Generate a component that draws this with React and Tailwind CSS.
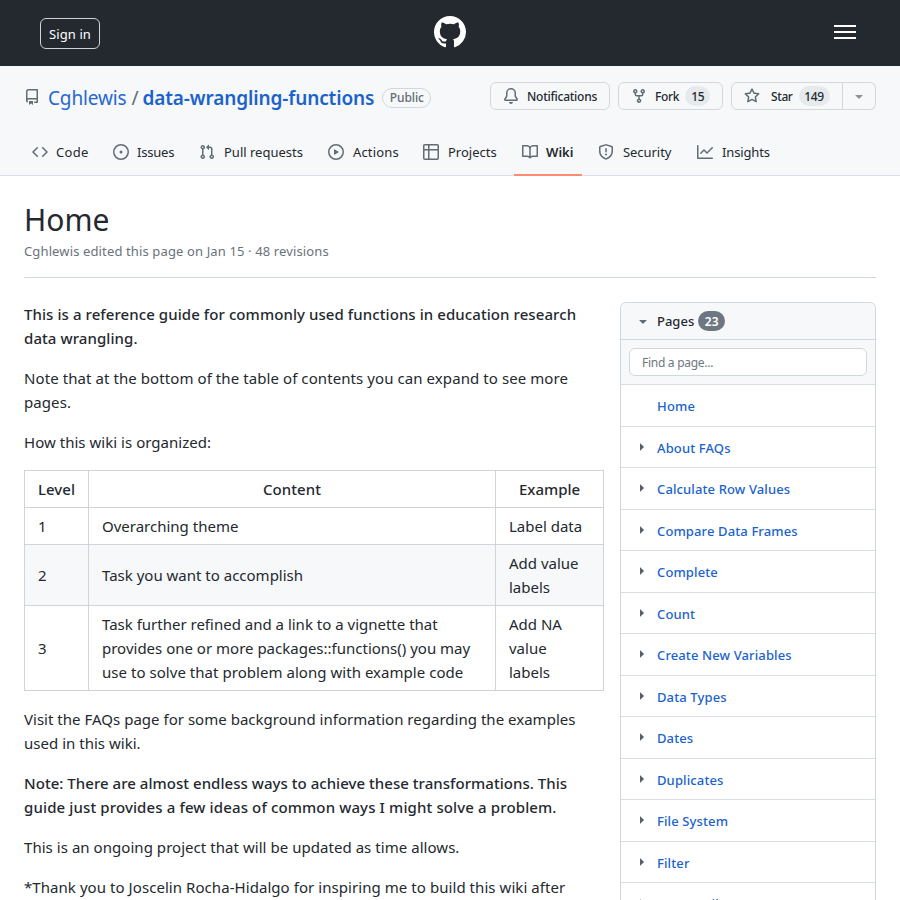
import React from "react";

const PATHS = {
  repo: "M2 2.5A2.5 2.5 0 014.5 0h8.75a.75.75 0 01.75.75v12.5a.75.75 0 01-.75.75h-2.5a.75.75 0 110-1.5h1.75v-2h-8a1 1 0 00-.714 1.7.75.75 0 01-1.072 1.05A2.495 2.495 0 012 11.5v-9zm10.5-1V9h-8c-.356 0-.694.074-1 .208V2.5a1 1 0 011-1h8zM5 12.25v3.25a.25.25 0 00.4.2l1.45-1.087a.25.25 0 01.3 0L8.6 15.7a.25.25 0 00.4-.2v-3.25a.25.25 0 00-.25-.25h-3.5a.25.25 0 00-.25.25z",
  bell: "M8 16a2 2 0 001.985-1.75c.017-.137-.097-.25-.235-.25h-3.5c-.138 0-.252.113-.235.25A2 2 0 008 16zM8 1.5A3.5 3.5 0 004.5 5v2.947c0 .346-.102.683-.294.97l-1.703 2.556a.018.018 0 00-.003.01l.001.006c0 .002.002.004.004.006a.017.017 0 00.006.004l.007.001h10.964l.007-.001a.016.016 0 00.006-.004.016.016 0 00.004-.006l.001-.007a.017.017 0 00-.003-.01l-1.703-2.554a1.75 1.75 0 01-.294-.97V5A3.5 3.5 0 008 1.5zM3 5a5 5 0 0110 0v2.947c0 .05.015.098.042.139l1.703 2.555A1.518 1.518 0 0113.482 13H2.518a1.518 1.518 0 01-1.263-2.36l1.703-2.554A.25.25 0 003 7.947V5z",
  fork: "M5 3.25a.75.75 0 11-1.5 0 .75.75 0 011.5 0zm0 2.122a2.25 2.25 0 10-1.5 0v.878A2.25 2.25 0 005.75 8.5h1.5v2.128a2.251 2.251 0 101.5 0V8.5h1.5a2.25 2.25 0 002.25-2.25v-.878a2.25 2.25 0 10-1.5 0v.878a.75.75 0 01-.75.75h-4.5A.75.75 0 015 6.25v-.878zm3.75 7.378a.75.75 0 11-1.5 0 .75.75 0 011.5 0zm3-8.75a.75.75 0 100-1.5.75.75 0 000 1.5z",
  star: "M8 .25a.75.75 0 01.673.418l1.882 3.815 4.21.612a.75.75 0 01.416 1.279l-3.046 2.97.719 4.192a.75.75 0 01-1.088.791L8 12.347l-3.766 1.98a.75.75 0 01-1.088-.79l.72-4.194L.818 6.374a.75.75 0 01.416-1.28l4.21-.611L7.327.668A.75.75 0 018 .25zm0 2.445L6.615 5.5a.75.75 0 01-.564.41l-3.097.45 2.24 2.184a.75.75 0 01.216.664l-.528 3.084 2.769-1.456a.75.75 0 01.698 0l2.77 1.456-.53-3.084a.75.75 0 01.216-.664l2.24-2.183-3.096-.45a.75.75 0 01-.564-.41L8 2.694v.001z",
  code: "M4.72 3.22a.75.75 0 011.06 1.06L2.06 8l3.72 3.72a.75.75 0 11-1.06 1.06L.47 8.53a.75.75 0 010-1.06l4.25-4.25zm6.56 0a.75.75 0 10-1.06 1.06L13.94 8l-3.72 3.72a.75.75 0 101.06 1.06l4.25-4.25a.75.75 0 000-1.06l-4.25-4.25z",
  issue: "M8 9.5a1.5 1.5 0 100-3 1.5 1.5 0 000 3z M8 0a8 8 0 100 16A8 8 0 008 0zM1.5 8a6.5 6.5 0 1113 0 6.5 6.5 0 01-13 0z",
  pull: "M7.177 3.073L9.573.677A.25.25 0 0110 .854v4.792a.25.25 0 01-.427.177L7.177 3.427a.25.25 0 010-.354zM3.75 2.5a.75.75 0 100 1.5.75.75 0 000-1.5zm-2.25.75a2.25 2.25 0 113 2.122v5.256a2.251 2.251 0 11-1.5 0V5.372A2.25 2.25 0 011.5 3.25zM11 2.5h-1V4h1a1 1 0 011 1v5.628a2.251 2.251 0 101.5 0V5A2.5 2.5 0 0011 2.5zm1 10.25a.75.75 0 111.5 0 .75.75 0 01-1.5 0zM3.75 12a.75.75 0 100 1.5.75.75 0 000-1.5z",
  play: "M1.5 8a6.5 6.5 0 1113 0 6.5 6.5 0 01-13 0zM8 0a8 8 0 100 16A8 8 0 008 0zM6.379 5.227A.25.25 0 006 5.442v5.117a.25.25 0 00.379.214l4.264-2.559a.25.25 0 000-.428L6.379 5.227z",
  table: "M0 1.75C0 .784.784 0 1.75 0h12.5C15.216 0 16 .784 16 1.75v12.5A1.75 1.75 0 0114.25 16H1.75A1.75 1.75 0 010 14.25V1.75zM1.5 6.5v7.75c0 .138.112.25.25.25H5v-8H1.5zM5 5H1.5V1.75a.25.25 0 01.25-.25H5V5zm1.5 1.5v8h7.75a.25.25 0 00.25-.25V6.5h-8zm8-1.5h-8V1.5h7.75a.25.25 0 01.25.25V5z",
  book: "M0 1.75A.75.75 0 01.75 1h4.253c1.227 0 2.317.59 3 1.501A3.744 3.744 0 0111.006 1h4.245a.75.75 0 01.75.75v10.5a.75.75 0 01-.75.75h-4.507a2.25 2.25 0 00-1.591.659l-.622.621a.75.75 0 01-1.06 0l-.622-.621A2.25 2.25 0 005.258 13H.75a.75.75 0 01-.75-.75V1.75zm8.755 3a2.25 2.25 0 012.25-2.25H14.5v9h-3.757c-.71 0-1.4.201-1.992.572l.004-7.322zm-1.504 7.324l.004-5.073-.002-2.253A2.25 2.25 0 005.003 2.5H1.5v9h3.757a3.75 3.75 0 011.994.574z",
  shield: "M7.467.133a1.75 1.75 0 011.066 0l5.25 1.68A1.75 1.75 0 0115 3.48V7c0 1.566-.32 3.182-1.303 4.682-.983 1.498-2.585 2.813-5.032 3.855a1.7 1.7 0 01-1.33 0c-2.447-1.042-4.049-2.357-5.032-3.855C1.32 10.182 1 8.566 1 7V3.48a1.75 1.75 0 011.217-1.667l5.25-1.68zm.61 1.429a.25.25 0 00-.153 0l-5.25 1.68a.25.25 0 00-.174.238V7c0 1.358.275 2.666 1.057 3.86.784 1.194 2.121 2.34 4.366 3.297a.2.2 0 00.154 0c2.245-.956 3.582-2.104 4.366-3.298C13.225 9.666 13.5 8.36 13.5 7V3.48a.25.25 0 00-.174-.237l-5.25-1.68zM9 10.5a1 1 0 11-2 0 1 1 0 012 0zm-.25-5.75a.75.75 0 10-1.5 0v3a.75.75 0 001.5 0v-3z",
  graph: "M1.5 1.75a.75.75 0 00-1.5 0v12.5c0 .414.336.75.75.75h14.5a.75.75 0 000-1.5H1.5V1.75zm14.28 2.53a.75.75 0 00-1.06-1.06L10 7.94 7.53 5.47a.75.75 0 00-1.06 0L3.22 8.72a.75.75 0 001.06 1.06L7 7.06l2.47 2.47a.75.75 0 001.06 0l5.25-5.25z",
  down: "M4.427 7.427l3.396 3.396a.25.25 0 00.354 0l3.396-3.396A.25.25 0 0011.396 7H4.604a.25.25 0 00-.177.427z",
  mark: "M8 0C3.58 0 0 3.58 0 8c0 3.54 2.29 6.53 5.47 7.59.4.07.55-.17.55-.38 0-.19-.01-.82-.01-1.49-2.01.37-2.53-.49-2.69-.94-.09-.23-.48-.94-.82-1.13-.28-.15-.68-.52-.01-.53.63-.01 1.08.58 1.23.82.72 1.21 1.87.87 2.33.66.07-.52.28-.87.51-1.07-1.78-.2-3.64-.89-3.64-3.95 0-.87.31-1.59.82-2.15-.08-.2-.36-1.02.08-2.12 0 0 .67-.21 2.2.82.64-.18 1.32-.27 2-.27.68 0 1.36.09 2 .27 1.53-1.04 2.2-.82 2.2-.82.44 1.1.16 1.92.08 2.12.51.56.82 1.27.82 2.15 0 3.07-1.87 3.75-3.65 3.95.29.25.54.73.54 1.48 0 1.07-.01 1.93-.01 2.2 0 .21.15.46.55.38A8.013 8.013 0 0016 8c0-4.42-3.58-8-8-8z",
};

function Icon({ name, className = "size-4 text-[#636b74]" }) {
  return (
    <svg viewBox="0 0 16 16" fill="currentColor" className={`shrink-0 ${className}`}>
      <path fillRule="evenodd" d={PATHS[name]} />
    </svg>
  );
}

const TABS = [
  ["code", "Code", "w-[73px]", "tracking-[0.3px]"],
  ["issue", "Issues", "w-[79px]", "tracking-[-0.2px]"],
  ["pull", "Pull requests", "w-[120px] -ml-px", "pl-px"],
  ["play", "Actions", "w-[87px] ml-px", "tracking-[0.15px] pl-px"],
  ["table", "Projects", "w-[91px]", "pl-px"],
  ["book", "Wiki", "w-[68px]", "font-semibold"],
  ["shield", "Security", "w-[91px]", "pl-px tracking-[-0.05px]"],
  ["graph", "Insights", "w-[90px]", "tracking-[-0.15px] pl-px"],
];

const PAGES = [
  "About FAQs", "Calculate Row Values", "Compare Data Frames", "Complete", "Count",
  "Create New Variables", "Data Types", "Dates", "Duplicates", "File System", "Filter", "Import Files",
];

const BTN = "flex h-7 items-center rounded-md border border-[#d5d8db] bg-[#f6f8fa]";
const COUNT = "flex h-5 items-center justify-center rounded-full bg-[#e7eaed] pt-px";

function TopBar() {
  return (
    <header className="flex h-[66px] justify-between bg-[#24292f] text-white">
      <div className="w-1/3 pt-[18px] pl-10">
        <button className="flex h-[31px] w-[60px] items-center justify-center rounded-md border border-[#d0d3d6] pt-0.5 text-[13px] tracking-[0.1px]">Sign in</button>
      </div>
      <Icon name="mark" className="mt-4 size-8 text-white" />
      <div className="flex w-1/3 justify-end pt-[25px] pr-11">
        <div className="flex w-[22px] flex-col gap-1">
          <span className="h-0.5 bg-white" />
          <span className="h-0.5 bg-white" />
          <span className="h-0.5 bg-white" />
        </div>
      </div>
    </header>
  );
}

function RepoHeader() {
  return (
    <div className="flex h-[110px] flex-col justify-between border-b border-[#d8dee4] bg-[#f6f8fa]">
      <div className="flex items-start px-6">
        <div className="mt-2 flex h-8 items-center pt-4 text-[19px]">
          <Icon name="repo" className="mr-2 mb-0.5 size-4 text-[#636b74]" />
          <span className="tracking-[-0.15px] text-[#2767cf]">Cghlewis</span>
          <span className="mr-1 ml-[5px] text-[#636b74]">/</span>
          <span className="font-semibold tracking-[-0.12px] text-[#1b63cc]">data-wrangling-functions</span>
          <span className="ml-2 flex h-5 w-[49px] items-center justify-center rounded-full border border-[#d0d7de] text-xs font-medium tracking-[-0.1px] text-[#636b74]">Public</span>
        </div>
        <div className="mt-4 ml-auto flex gap-2 text-xs font-medium text-[#24292f]">
          <button className={`${BTN} w-[120px] pl-3`}>
            <Icon name="bell" />
            <span className="ml-2 pt-px tracking-[-0.25px]">Notifications</span>
          </button>
          <button className={`${BTN} w-[105px] pl-3`}>
            <Icon name="fork" />
            <span className="ml-2 pt-px tracking-[-0.3px]">Fork</span>
            <span className={`${COUNT} ml-1.5 w-[25px] tracking-[-0.4px]`}>15</span>
          </button>
          <div className="flex">
            <button className={`${BTN} w-28 rounded-r-none pl-3`}>
              <Icon name="star" />
              <span className="ml-[11px] pt-px tracking-[-0.4px]">Star</span>
              <span className={`${COUNT} ml-1.5 w-[31px] tracking-[-0.4px]`}>149</span>
            </button>
            <button className={`${BTN} w-[33px] justify-center rounded-l-none border-l-0`}>
              <Icon name="down" className="size-4 text-[#8c9196]" />
            </button>
          </div>
        </div>
      </div>
      <nav className="-mb-px flex h-12 gap-2 pl-6 text-[13px] text-[#24292f]">
        {TABS.map(([icon, label, width, text]) => (
          <a key={label} className={`flex shrink-0 items-center gap-2 border-b-2 pt-0.5 pl-2 ${width} ${label === "Wiki" ? "border-[#fd8c73]" : "border-transparent"}`}>
            <Icon name={icon} />
            <span className={`pt-px whitespace-nowrap ${text}`}>{label}</span>
          </a>
        ))}
      </nav>
    </div>
  );
}

const CELL = "border border-[#d0d4d8] px-[13px] py-1.5";

function LevelTable() {
  return (
    <table className="mb-4 w-[580px] table-fixed border-collapse">
      <colgroup>
        <col className="w-16" />
        <col className="w-[407px]" />
        <col />
      </colgroup>
      <thead>
        <tr>
          <th className={`${CELL} font-medium`}>Level</th>
          <th className={`${CELL} font-medium tracking-[0.05px]`}>Content</th>
          <th className={`${CELL} font-medium`}>Example</th>
        </tr>
      </thead>
      <tbody>
        <tr>
          <td className={CELL}>1</td>
          <td className={CELL}>Overarching theme</td>
          <td className={CELL}>Label data</td>
        </tr>
        <tr className="bg-[#f6f8fa]">
          <td className={CELL}>2</td>
          <td className={CELL}>Task you want to accomplish</td>
          <td className={CELL}>Add value<br />labels</td>
        </tr>
        <tr>
          <td className={CELL}>3</td>
          <td className={CELL}>Task further refined and a link to a vignette that<br />provides one or more packages::functions() you may<br /><span className="tracking-[0.04px]">use to solve that problem along with example code</span></td>
          <td className={CELL}>Add NA<br />value<br />labels</td>
        </tr>
      </tbody>
    </table>
  );
}

function Article() {
  return (
    <article className="w-[580px] text-[15px] leading-6 whitespace-nowrap [&_p]:mb-4">
      <p className="font-medium tracking-[0.075px]">This is a reference guide for commonly used functions in education research<br />data wrangling.</p>
      <p className="tracking-[0.08px]">Note that at the bottom of the table of contents you can expand to see more<br />pages.</p>
      <p className="tracking-[0.03px]">How this wiki is organized:</p>
      <LevelTable />
      <p className="tracking-[0.02px]">Visit the FAQs page for some background information regarding the examples<br />used in this wiki.</p>
      <p className="font-medium tracking-[0.035px]">Note: There are almost endless ways to achieve these transformations. This<br /><span className="tracking-[0.125px]">guide just provides a few ideas of common ways I might solve a problem.</span></p>
      <p className="tracking-[0.045px]">This is an ongoing project that will be updated as time allows.</p>
      <p className="tracking-[0.06px]">*Thank you to Joscelin Rocha-Hidalgo for inspiring me to build this wiki after</p>
    </article>
  );
}

function Sidebar() {
  return (
    <aside className="w-64 rounded-t-md border border-[#d0d7de] text-[13px] font-medium">
      <div className="flex h-[37px] items-center rounded-t-md border-b border-[#d0d7de] bg-[#f6f8fa] pl-3.5">
        <Icon name="down" className="size-4 text-[#636b74]" />
        <span className="ml-1.5 pt-px">Pages</span>
        <span className="ml-1 flex h-5 w-[27px] items-center justify-center rounded-full bg-[#6e7781] pt-px text-xs font-semibold text-white">23</span>
      </div>
      <div className="flex h-[45px] items-center border-b border-[#d8dee4] bg-[#f6f8fa] px-2">
        <div className="flex h-7 w-full items-center rounded-md border border-[#d0d7de] bg-white px-3 pt-0.5 text-xs font-normal tracking-[-0.28px] text-[#6e7781]">Find a page...</div>
      </div>
      <div className="flex h-[41.5px] items-center border-b border-[#d8dee4] pt-0.5 pl-9 tracking-[0.2px] text-[#1b63cc]">Home</div>
      {PAGES.map((page) => (
        <div key={page} className="flex h-[41.5px] items-center border-b border-[#d8dee4] pl-3">
          <Icon name="down" className="mr-2 size-4 -rotate-90 text-[#57606a]" />
          <span className="pt-[3px] tracking-[0.12px] text-[#1b63cc] last-of-type:whitespace-nowrap">{page}</span>
        </div>
      ))}
    </aside>
  );
}

export default function App() {
  return (
    <div className="h-[900px] w-[900px] overflow-hidden bg-white font-['Noto_Sans','Open_Sans',sans-serif] text-[#24292f]">
      <TopBar />
      <RepoHeader />
      <main className="px-6 pt-6">
        <div className="h-[78px] border-b border-[#d0d7de]">
          <h1 className="h-10 text-[30px] leading-[40px]">Home</h1>
          <p className="pt-px text-[13px] leading-[21px] tracking-[0.13px] text-[#6a727b]">Cghlewis edited this page on Jan 15 · 48 revisions</p>
        </div>
        <div className="flex items-start justify-between pt-6">
          <Article />
          <Sidebar />
        </div>
      </main>
    </div>
  );
}
